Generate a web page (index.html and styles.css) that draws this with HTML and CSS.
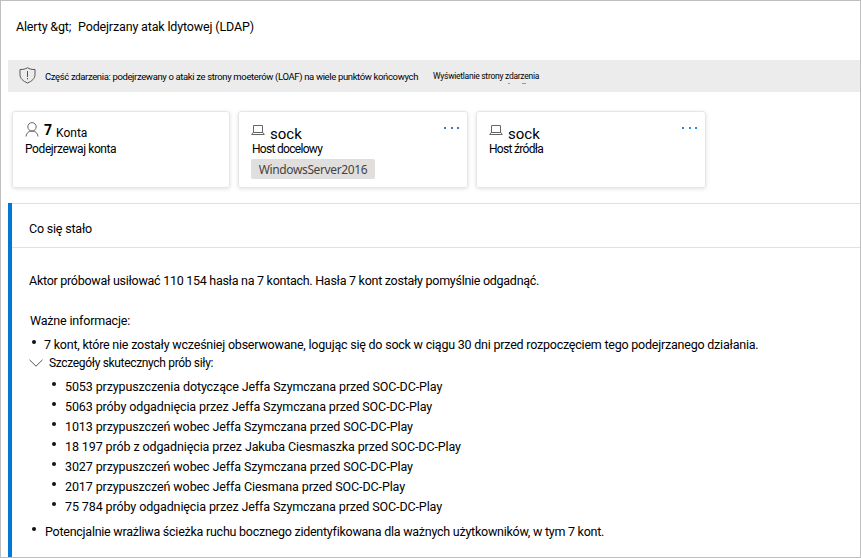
FILE: index.html
```html
<!DOCTYPE html>
<html lang="pl">
<head>
<meta charset="utf-8">
<title>Alerty</title>
<link rel="stylesheet" href="styles.css">
</head>
<body>
<main class="page">
  <nav class="crumbs"><span class="crumb-root">Alerty &amp;gt;</span><span class="crumb-title">Podejrzany atak ldytowej (LDAP)</span></nav>
  <div class="banner">
    <svg class="shield" width="17" height="17" viewBox="0 0 17 17" fill="none" stroke="#555"><path d="M8.5.7C6.5 2.1 4 2.6 1 2.5v5c0 4 3 6.600 7.500 8.500C13 14.100 16 11.500 16 7.500v-5C13 2.600 10.500 2.100 8.500.7z"/><path d="M8.500 4v6M8.500 11v1.300"/></svg>
    <span class="banner-text">Część zdarzenia: podejrzewany o ataki ze strony moeterów (LOAF) na wiele punktów końcowych</span>
    <a class="banner-link">Wyświetlanie strony zdarzenia<svg class="marks" width="20" height="1" viewBox="0 0 20 1" fill="#7f9cc4"><path d="M0 0h2v1H0zM14 0h4v1h-4z"/></svg></a>
  </div>
  <section class="cards">
    <article class="card card-accounts">
      <div class="card-head">
        <svg class="person" width="14" height="15" viewBox="0 0 14 15" fill="none" stroke="#666"><circle cx="7" cy="4.800" r="4.200"/><path d="M1 14.500C1.300 11 3.600 9 7 9s5.700 2 6 5.500"/></svg>
        <b class="count">7</b><span class="count-label">Konta</span>
      </div>
      <div class="sub sub-accounts">Podejrzewaj konta</div>
    </article>
    <article class="card card-host">
      <div class="card-head">
        <svg class="laptop" width="14" height="12" viewBox="0 0 14 12" fill="none" stroke="#666"><path d="M2.500 8.500v-7h9v7M2 8.500h10l1.300 2H.7z"/></svg>
        <span class="host">sock</span>
        <svg class="more" width="16" height="4" viewBox="0 0 16 4" fill="#4a78b5"><path d="M0 1h2v2H0zM7 1h2v2H7zM13 1h2v2h-2z"/></svg>
      </div>
      <div class="sub sub-target">Host docelowy</div>
      <span class="tag">WindowsServer2016</span>
    </article>
    <article class="card card-source">
      <div class="card-head">
        <svg class="laptop" width="14" height="12" viewBox="0 0 14 12" fill="none" stroke="#666"><path d="M2.500 8.500v-7h9v7M2 8.500h10l1.300 2H.7z"/></svg>
        <span class="host">sock</span>
        <svg class="more" width="16" height="4" viewBox="0 0 16 4" fill="#2b88d8"><path d="M0 1h2v2H0zM7 1h2v2H7zM13 1h2v2h-2z"/></svg>
      </div>
      <div class="sub sub-source">Host źródła</div>
    </article>
  </section>
  <section class="panel">
    <h2 class="panel-title">Co się stało</h2>
    <p class="summary">Aktor próbował usiłować 110 154 hasła na 7 kontach. Hasła 7 kont zostały pomyślnie odgadnąć.</p>
    <p class="info">Ważne informacje:</p>
    <ul class="facts">
      <li class="fact">7 kont, które nie zostały wcześniej obserwowane, logując się do sock w ciągu 30 dni przed rozpoczęciem tego podejrzanego działania.</li>
      <li class="details">
        <div class="details-head"><svg width="14" height="8" viewBox="0 0 14 8" fill="none" stroke="#555"><path d="M.5.8 7 7.200 13.500.8"/></svg><span class="details-label">Szczegóły skutecznych prób siły:</span></div>
        <ul class="guesses">
          <li>5053 przypuszczenia dotyczące Jeffa Szymczana przed SOC-DC-Play</li>
          <li>5063 próby odgadnięcia przez Jeffa Szymczana przed SOC-DC-Play</li>
          <li>1013 przypuszczeń wobec Jeffa Szymczana przed SOC-DC-Play</li>
          <li>18 197 prób z odgadnięcia przez Jakuba Ciesmaszka przed SOC-DC-Play</li>
          <li>3027 przypuszczeń wobec Jeffa Szymczana przed SOC-DC-Play</li>
          <li>2017 przypuszczeń wobec Jeffa Ciesmana przed SOC-DC-Play</li>
          <li>75 784 próby odgadnięcia przez Jeffa Szymczana przed SOC-DC-Play</li>
        </ul>
      </li>
      <li class="fact fact-last">Potencjalnie wrażliwa ścieżka ruchu bocznego zidentyfikowana dla ważnych użytkowników, w tym 7 kont.</li>
    </ul>
  </section>
</main>
</body>
</html>
```
FILE: styles.css
```css
* { box-sizing: border-box; }
body { margin: 0; background: #fff; color: #000; font: 12.5px/20px Roboto, "Liberation Sans", sans-serif; white-space: nowrap; }
svg { display: block; flex: none; }
ul { list-style: none; margin: 0; padding: 0; }
.page { width: 861px; height: 558px; border: 1px solid #bfbfbf; overflow: hidden; }
.crumbs { display: flex; height: 59px; padding: 16px 0 0 15px; }
.crumb-root { width: 62px; letter-spacing: -.16px; }
.crumb-title { letter-spacing: -.15px; }
.banner { display: flex; height: 32px; margin-left: 7px; padding-left: 11px; background: #ececec; line-height: 32px; }
.shield { margin-top: 7px; }
.banner-text { width: 388px; margin: 1px 0 0 9px; font-size: 9.5px; letter-spacing: -.36px; }
.banner-link { position: relative; font-size: 8.5px; letter-spacing: -.27px; }
.marks { position: absolute; left: 75px; top: 23px; }
.cards { display: flex; gap: 8px; padding: 19px 0 0 11px; }
.card { height: 77px; padding: 9px 12px; border: 1px solid #e6e6e6; border-radius: 3px; box-shadow: 0 1px 4px rgba(0,0,0,.12); }
.card-accounts { width: 218px; }
.card-host, .card-source { width: 230px; }
.card-head { display: flex; height: 20px; }
.person { margin-top: 1px; }
.count { margin-left: 5px; font-size: 14px; line-height: 19px; }
.count-label { margin: 2px 0 0 4px; font-size: 12px; }
.laptop { margin-top: 3px; }
.host { margin: 3px 0 0 5px; font-size: 15px; }
.more { margin: 5px -5px 0 auto; }
.sub { height: 18px; font-size: 12px; line-height: 17px; }
.sub-accounts { letter-spacing: -.4px; }
.sub-target { padding-left: 1px; letter-spacing: -.7px; }
.sub-source { letter-spacing: -.7px; }
.tag { display: block; width: 124px; height: 20px; border-radius: 2px; background: #e1dfdd; color: #444; font: 12px/21px "Noto Sans", sans-serif; letter-spacing: -.38px; text-align: center; }
.panel { height: 355px; margin: 15px 0 0 7px; border-left: 4px solid #0078d4; }
.panel-title { height: 45px; margin: 0; padding: 15px 0 0 17px; border-top: 1px solid #e1e1e1; border-bottom: 1px solid #e1e1e1; font-size: 12.5px; font-weight: 400; line-height: 20px; letter-spacing: -.2px; }
.summary { margin: 23px 0 0 17px; letter-spacing: -.275px; }
.info { margin: 20px 0 0 18px; letter-spacing: -.18px; }
.facts { margin: 4px 0 0 20px; }
.fact, .guesses li { display: flex; letter-spacing: -.22px; }
.fact::before, .guesses li::before { content: ""; flex: none; width: 4px; height: 4px; margin: 5px 8px 0 0; border-radius: 50%; background: #111; }
.guesses li { letter-spacing: -.11px; }
.guesses li::before { margin-right: 9px; }
.fact-last { margin-top: 5px; letter-spacing: -.25px; }
.fact-last::before { margin-right: 9px; }
.details-head { display: flex; height: 20px; margin-left: -3px; padding-top: 4px; }
.details-label { margin: -6px 0 0 6px; font-size: 12px; letter-spacing: -.33px; }
.guesses { margin: 2px 0 0 20px; }
```
